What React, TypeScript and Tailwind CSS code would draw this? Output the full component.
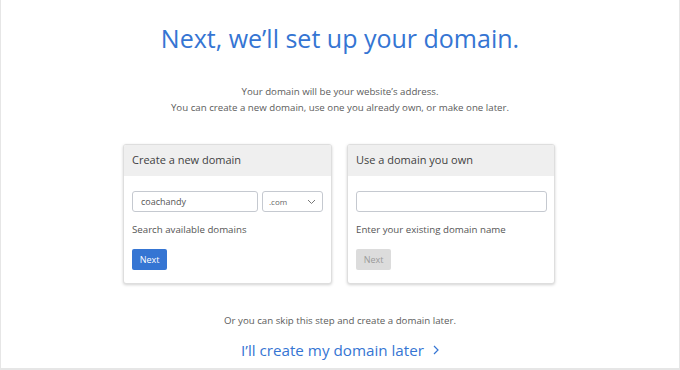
import React from 'react';

const App: React.FC = () => {
  return (
    <div
      className="w-[680px] h-[370px] bg-white border-x border-b-2 border-[#e6e6e6] flex flex-col items-center text-[#555]"
      style={{ fontFamily: '"Open Sans", "Liberation Sans", sans-serif' }}
    >
      <h1 className="mt-[18px] text-[25px] leading-[40px] font-normal text-[#3575d3]">
        Next, we’ll set up your domain.
      </h1>

      <div className="mt-[26px] text-center text-[9.7px] leading-[16px] text-[#5c5c5c]">
        <p>Your domain will be your website’s address.</p>
        <p>You can create a new domain, use one you already own, or make one later.</p>
      </div>

      <div className="mt-[28px] flex gap-[15px] -ml-[2px]">
        {/* new domain */}
        <div className="w-[209px] h-[140px] bg-white border border-[#dedede] rounded-[3px] shadow-[0_1px_3px_rgba(0,0,0,0.18)] overflow-hidden">
          <div className="h-[31px] bg-[#efefef] px-[8px] flex items-center text-[11px] text-[#3f3f3f]">
            Create a new domain
          </div>
          <div className="px-[8px] pt-[15px]">
            <div className="flex gap-[4px]">
              <div className="w-[126px] h-[21px] border border-[#c5c9d0] rounded-[3px] px-[8px] flex items-center text-[9px] text-[#555]">
                coachandy
              </div>
              <div className="w-[61px] h-[21px] border border-[#c5c9d0] rounded-[3px] pl-[6px] pr-[6px] flex items-center justify-between text-[8px] text-[#666]">
                <span>.com</span>
                <svg width="9" height="6" viewBox="0 0 9 6" fill="none" stroke="#777" strokeWidth="1">
                  <path d="M1 1l3.5 3.5L8 1" />
                </svg>
              </div>
            </div>
            <p className="mt-[10px] text-[9.7px] leading-[16px]">Search available domains</p>
            <button className="mt-[11px] w-[35px] h-[21px] bg-[#3575d3] rounded-[2px] text-white text-[9px] flex items-center justify-center">
              Next
            </button>
          </div>
        </div>

        {/* own domain */}
        <div className="w-[208px] h-[140px] bg-white border border-[#dedede] rounded-[3px] shadow-[0_1px_3px_rgba(0,0,0,0.18)] overflow-hidden">
          <div className="h-[31px] bg-[#efefef] px-[8px] flex items-center text-[11px] text-[#3f3f3f]">
            Use a domain you own
          </div>
          <div className="px-[8px] pt-[15px]">
            <div className="w-[191px] h-[21px] border border-[#c5c9d0] rounded-[3px]" />
            <p className="mt-[10px] text-[9.7px] leading-[16px]">Enter your existing domain name</p>
            <button className="mt-[11px] w-[35px] h-[21px] bg-[#dcdcdc] rounded-[2px] text-[#9a9a9a] text-[9px] flex items-center justify-center">
              Next
            </button>
          </div>
        </div>
      </div>

      <p className="mt-[29px] text-[9.7px] leading-[16px] text-[#5c5c5c]">
        Or you can skip this step and create a domain later.
      </p>
      <a className="mt-[10px] flex items-center gap-[9px] text-[15.2px] leading-[22px] text-[#3575d3]">
        <span>I’ll create my domain later</span>
        <svg width="6" height="10" viewBox="0 0 6 10" fill="none" stroke="#3575d3" strokeWidth="1.2">
          <path d="M1 1l4 4-4 4" />
        </svg>
      </a>
    </div>
  );
};

export default App;
